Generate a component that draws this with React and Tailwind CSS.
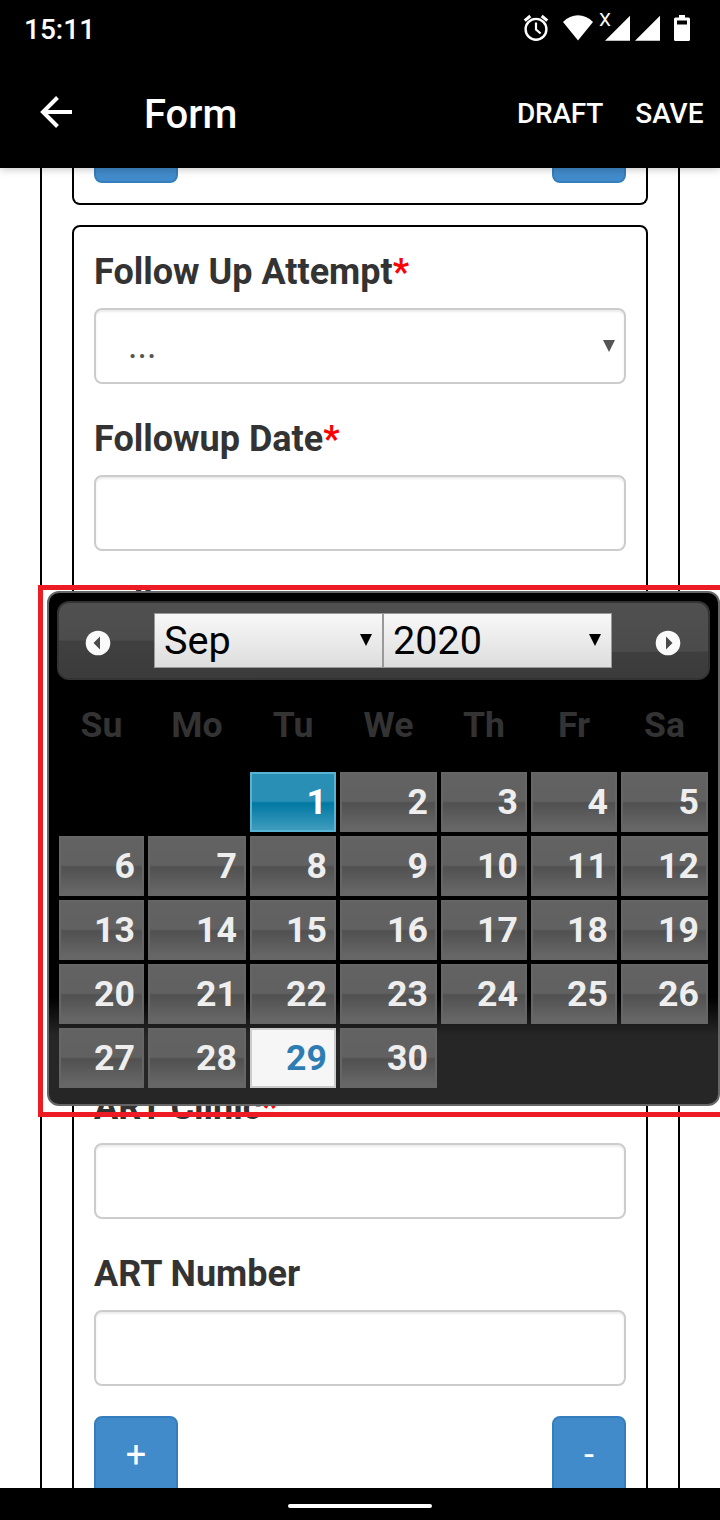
import React, { useState } from 'react';

const WEEKDAYS = ['Su', 'Mo', 'Tu', 'We', 'Th', 'Fr', 'Sa'];

const FIELDS = [
  { id: 'attempt', label: 'Follow Up Attempt', required: true, select: true },
  { id: 'date', label: 'Followup Date', required: true },
  { id: 'outcome', label: 'Follow' },
  { id: 'blank1', label: '' },
  { id: 'blank2', label: '' },
  { id: 'clinic', label: 'ART Clinic', required: true },
  { id: 'number', label: 'ART Number' },
];

const Triangle = ({ className }) => (
  <svg className={className} width="12" height="12" viewBox="0 0 12 12" fill="currentColor">
    <path d="M0 0h12L6 12z" />
  </svg>
);

const StatusBar = () => (
  <div className="h-14 flex items-center justify-between pl-6 pr-[29px] text-[28px] font-medium">
    <span className="pt-[3px]">15:11</span>
    <svg width="170" height="56" viewBox="521 0 170 56" fill="white">
      <g fill="none" stroke="white" strokeWidth="2.4">
        <circle cx="536" cy="29.3" r="10.4" />
        <path d="M536 22.5v7l4.6 4" strokeWidth="2.2" />
        <path d="M524.7 20.6l5.6-4.6M547.3 20.6l-5.6-4.6" strokeWidth="3" />
      </g>
      <path d="M563 22c8.5-9.1 21.5-9.1 30 0l-15 18.5z" />
      <text x="599" y="26" fontSize="19" fontWeight="400">
        X
      </text>
      <path d="M605 40.7h25V15.7zM635 40.7h25V15.7z" />
      <path
        fillRule="evenodd"
        d="M679 15h6v2.500h3.500a1.500 1.500 0 011.500 1.500v20.500a1.500 1.500 0 01-1.500 1.500h-13a1.500 1.500 0 01-1.500-1.500V19a1.500 1.500 0 011.500-1.500h3.500zM677 20.500v4h10v-4z"
      />
    </svg>
  </div>
);

const AppBar = () => (
  <div className="h-28 flex items-center pl-10 pr-[16.5px] font-medium">
    <svg width="32" height="32" viewBox="0 0 32 32" fill="none" stroke="white" strokeWidth="4">
      <path d="M32 16H3M17.5 1.5L3 16l14.5 14.5" />
    </svg>
    <h1 className="ml-[72px] pt-1.5 text-[40px] leading-none">Form</h1>
    <div className="ml-auto flex gap-8 pt-[3px] text-[28px] leading-none">
      <button className="tracking-[-0.2px]">DRAFT</button>
      <button>SAVE</button>
    </div>
  </div>
);

const RowButtons = ({ add, remove }) => (
  <div className="flex justify-between text-white text-[36px] leading-[51px]">
    <button className="w-[84px] h-[79px] rounded-lg border-2 border-[#357ebd] bg-[#428bca]">
      {add}
    </button>
    <button className="w-[74px] h-[79px] rounded-lg border-2 border-[#357ebd] bg-[#428bca]">
      {remove}
    </button>
  </div>
);

const Field = ({ label, required, select }) => (
  <div className="mb-[30px]">
    <label className="block h-[51px] mb-[10px] text-[36px] leading-[51px] font-bold text-[#333]">
      {label}
      {required && <span className="text-[#ff0000]">*</span>}
    </label>
    <div className="h-[76px] flex items-center justify-between pl-8 pr-[9px] rounded-lg border-2 border-[#ccc] bg-white text-[36px] text-[#555] shadow-[inset_0_2px_2px_rgba(0,0,0,0.075)]">
      {select && (
        <>
          <span>...</span>
          <Triangle />
        </>
      )}
    </div>
  </div>
);

const ArrowButton = ({ flip, onClick }) => (
  <button onClick={onClick} aria-label={flip ? 'Next' : 'Prev'} className="mt-1">
    <svg className={flip ? 'rotate-180' : ''} width="26" height="26" viewBox="0 0 26 26">
      <circle cx="13" cy="13" r="12.3" fill="#fafafa" />
      <path d="M8.5 13l6.5-6.5v13z" fill="#4a4a4a" />
    </svg>
  </button>
);

const HeaderSelect = ({ value }) => (
  <div className="w-[229px] h-[55px] flex items-center justify-between pl-[9px] pr-[10px] border border-[#999] bg-linear-to-b from-[#f8f8f8] to-[#dddddd] text-[39.6px] text-black">
    <span className="pt-px">{value}</span>
    <Triangle className="-mt-[2px]" />
  </div>
);

const Day = ({ day, selected, today, onSelect }) => {
  let look =
    'border-[#666] text-[#eee] bg-[linear-gradient(#626262_0%,#616161_48%,#515151_52%,#686868_100%)]';
  if (today) {
    look = 'border-[#ccc] text-[#2e7db2] bg-[#f6f6f6]';
  }
  if (selected) {
    look =
      'border-[#59b4d4] text-white bg-[linear-gradient(#2a8fb4_0%,#2a8fb4_48%,#0078a3_52%,#3f9cbd_100%)]';
  }
  return (
    <button
      onClick={() => onSelect(day)}
      className={`h-[60px] border-2 pr-[7px] text-right text-[35.64px] leading-[56px] font-bold ${look}`}
    >
      {day}
    </button>
  );
};

const DatePicker = () => {
  const [selected, setSelected] = useState(1);
  const days = Array.from({ length: 30 }, (_, i) => i + 1);

  return (
    <div className="absolute left-[47px] top-[591px] w-[673px] h-[515px] p-2 rounded-xl border-2 border-[#666] bg-[linear-gradient(#000_0px,#000_404px,#262626_442px,#262626_100%)]">
      <div className="relative h-[79px] rounded-xl border-2 border-[#333] bg-linear-to-b from-[#505050] to-[#484848] overflow-hidden">
        {/* glossy wave behind the header controls */}
        <svg className="absolute inset-0" width="649" height="75" viewBox="0 0 649 75">
          <defs>
            <linearGradient id="wave" x1="0" y1="0" x2="0" y2="1">
              <stop offset="0" stopColor="#404040" />
              <stop offset="1" stopColor="#3b3b3b" />
            </linearGradient>
          </defs>
          <path d="M0 37.5H95C250 37.5 400 49 553 49l96-.5V75H0z" fill="url(#wave)" />
        </svg>
        <div className="relative h-full flex items-center justify-between pl-[26px] pr-[27px]">
          <ArrowButton />
          <div className="flex">
            <HeaderSelect value="Sep" />
            <HeaderSelect value="2020" />
          </div>
          <ArrowButton flip />
        </div>
      </div>
      <div className="px-[2px] grid grid-cols-[85px_98px_86px_97px_86px_86px_87px] gap-x-1 text-[35.64px] font-bold">
        {WEEKDAYS.map((name) => (
          <div key={name} className="h-[92px] text-center leading-[90px] text-[#333]">
            {name}
          </div>
        ))}
      </div>
      <div className="px-[2px] grid grid-cols-[85px_98px_86px_97px_86px_86px_87px] gap-1">
        <div className="col-span-2" />
        {days.map((day) => (
          <Day
            key={day}
            day={day}
            selected={day === selected}
            today={day === 29}
            onSelect={setSelected}
          />
        ))}
      </div>
    </div>
  );
};

const App = () => {
  return (
    <div className="relative w-[720px] h-[1520px] flex flex-col overflow-hidden bg-white font-['Roboto',sans-serif]">
      <header className="relative z-10 bg-black text-white shadow-[0_1px_8px_rgba(0,0,0,0.25)]">
        <StatusBar />
        <AppBar />
      </header>

      <main className="flex-1 min-h-0 mx-10 px-[30px] border-x-2 border-black overflow-hidden">
        <section className="h-[37px] flex flex-col justify-end px-5 pb-5 rounded-b-lg border-2 border-t-0 border-black">
          <RowButtons />
        </section>
        <section className="mt-5 p-5 rounded-lg border-2 border-black">
          {FIELDS.map(({ id, ...field }) => (
            <Field key={id} {...field} />
          ))}
          <RowButtons add="+" remove="-" />
        </section>
      </main>

      <DatePicker />
      <div className="absolute left-[38px] top-[585px] w-[700px] h-[532px] border-5 border-[#ed1c24] pointer-events-none" />

      <footer className="relative h-8 shrink-0 flex items-center justify-center bg-black">
        <div className="mt-1 w-36 h-1 rounded-full bg-white" />
      </footer>
    </div>
  );
};

export default App;
